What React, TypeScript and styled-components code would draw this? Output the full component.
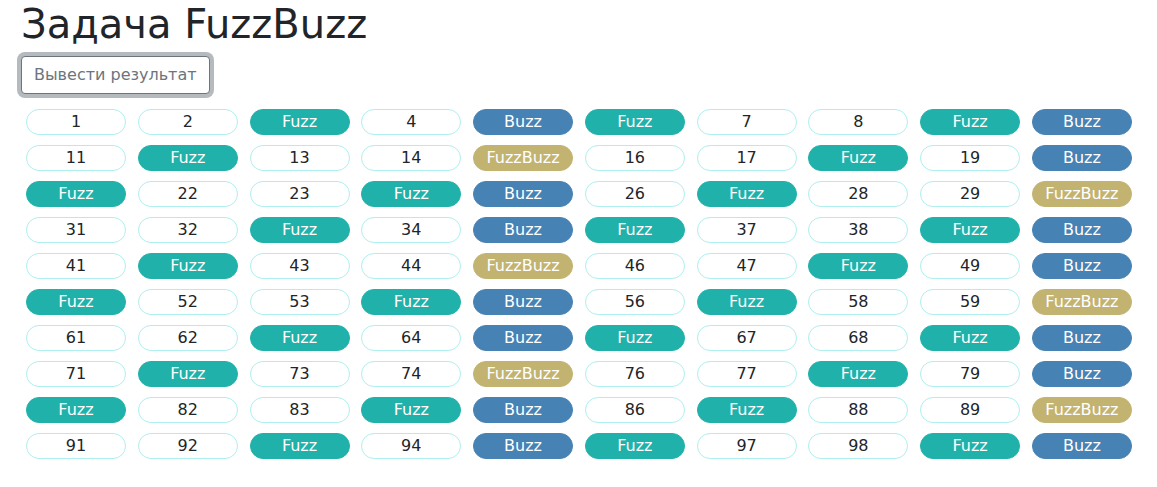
import React from "react";
import styled, { createGlobalStyle } from "styled-components";

type Kind = "number" | "fuzz" | "buzz" | "fuzzbuzz";

const GlobalStyle = createGlobalStyle`
  *, *::before, *::after { box-sizing: border-box; }
  body {
    margin: 0;
    background: #fff;
    color: #212529;
    font-family: "DejaVu Sans", sans-serif;
    font-size: 16px;
    line-height: 24px;
  }
`;

const Page = styled.main`
  padding: 0 20px 0 21px;
`;

const Title = styled.h1`
  margin: 0 0 8px;
  font-size: 40px;
  font-weight: 400;
  line-height: 48px;
`;

const OutlineButton = styled.button`
  display: block;
  padding: 6px 12px;
  border: 1px solid #6c757d;
  border-radius: 4px;
  background: #fff;
  color: #6c757d;
  font: inherit;
  box-shadow: 0 0 0 4px rgba(108, 117, 125, 0.5);
  outline: 0;
  cursor: pointer;
`;

const Grid = styled.div`
  display: grid;
  grid-template-columns: repeat(10, 100px);
  justify-content: space-between;
  row-gap: 10px;
  padding: 15px 5px;
`;

const colours: Record<Kind, { fill: string; text: string; border: string }> = {
  number: { fill: "#fff", text: "#212529", border: "paleturquoise" },
  fuzz: { fill: "lightseagreen", text: "#fff", border: "lightseagreen" },
  buzz: { fill: "steelblue", text: "#fff", border: "steelblue" },
  fuzzbuzz: { fill: "#c3b370", text: "#fff", border: "#c3b370" },
};

const Pill = styled.div<{ $kind: Kind }>`
  border: 1px solid ${({ $kind }) => colours[$kind].border};
  border-radius: 15px;
  background: ${({ $kind }) => colours[$kind].fill};
  color: ${({ $kind }) => colours[$kind].text};
  text-align: center;
`;

const kindOf = (n: number): Kind =>
  n % 15 === 0 ? "fuzzbuzz" : n % 5 === 0 ? "buzz" : n % 3 === 0 ? "fuzz" : "number";

const labels = { fuzz: "Fuzz", buzz: "Buzz", fuzzbuzz: "FuzzBuzz" };

export default function App() {
  const numbers = Array.from({ length: 100 }, (_, i) => i + 1);
  return (
    <>
      <GlobalStyle />
      <Page>
        <Title>Задача FuzzBuzz</Title>
        <OutlineButton type="button">Вывести результат</OutlineButton>
        <Grid>
          {numbers.map((n) => {
            const kind = kindOf(n);
            return (
              <Pill key={n} $kind={kind}>
                {kind === "number" ? n : labels[kind]}
              </Pill>
            );
          })}
        </Grid>
      </Page>
    </>
  );
}
